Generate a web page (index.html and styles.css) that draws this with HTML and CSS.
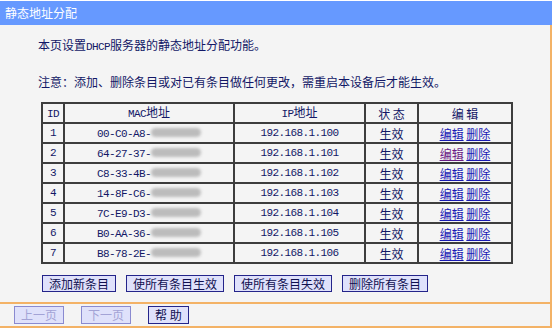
FILE: index.html
```html
<!DOCTYPE html>
<html lang="zh-CN">
<head>
<meta charset="utf-8">
<title>静态地址分配</title>
<link rel="stylesheet" href="styles.css">
</head>
<body>
<div class="page">
  <div class="titlebar">静态地址分配</div>
  <div class="content">
    <p class="line first">本页设置<span class="asc">DHCP</span>服务器的静态地址分配功能。</p>
    <p class="line second">注意：添加、删除条目或对已有条目做任何更改，需重启本设备后才能生效。</p>
    <table class="grid">
      <colgroup>
        <col class="c-id"><col class="c-mac"><col class="c-ip"><col class="c-st"><col class="c-ed">
      </colgroup>
      <thead>
        <tr><th><span class="asc">ID</span></th><th><span class="asc">MAC</span>地址</th><th><span class="asc">IP</span>地址</th><th>状 态</th><th>编 辑</th></tr>
      </thead>
      <tbody>
        <tr><td class="asc">1</td><td><span class="asc">00-C0-A8-</span><span class="blur"></span></td><td class="asc">192.168.1.100</td><td>生效</td><td><a href="#" class="lnk">编辑</a> <a href="#" class="lnk">删除</a></td></tr>
        <tr><td class="asc">2</td><td><span class="asc">64-27-37-</span><span class="blur"></span></td><td class="asc">192.168.1.101</td><td>生效</td><td><a href="#" class="lnk visited">编辑</a> <a href="#" class="lnk">删除</a></td></tr>
        <tr><td class="asc">3</td><td><span class="asc">C8-33-4B-</span><span class="blur"></span></td><td class="asc">192.168.1.102</td><td>生效</td><td><a href="#" class="lnk">编辑</a> <a href="#" class="lnk">删除</a></td></tr>
        <tr><td class="asc">4</td><td><span class="asc">14-8F-C6-</span><span class="blur"></span></td><td class="asc">192.168.1.103</td><td>生效</td><td><a href="#" class="lnk">编辑</a> <a href="#" class="lnk">删除</a></td></tr>
        <tr><td class="asc">5</td><td><span class="asc">7C-E9-D3-</span><span class="blur"></span></td><td class="asc">192.168.1.104</td><td>生效</td><td><a href="#" class="lnk">编辑</a> <a href="#" class="lnk">删除</a></td></tr>
        <tr><td class="asc">6</td><td><span class="asc">B0-AA-36-</span><span class="blur"></span></td><td class="asc">192.168.1.105</td><td>生效</td><td><a href="#" class="lnk">编辑</a> <a href="#" class="lnk">删除</a></td></tr>
        <tr><td class="asc">7</td><td><span class="asc">B8-78-2E-</span><span class="blur"></span></td><td class="asc">192.168.1.106</td><td>生效</td><td><a href="#" class="lnk">编辑</a> <a href="#" class="lnk">删除</a></td></tr>
      </tbody>
    </table>
    <div class="actions">
      <button class="btn">添加新条目</button>
      <button class="btn">使所有条目生效</button>
      <button class="btn">使所有条目失效</button>
      <button class="btn">删除所有条目</button>
    </div>
  </div>
  <div class="footer">
    <button class="btn btn-foot" disabled>上一页</button>
    <button class="btn btn-foot" disabled>下一页</button>
    <button class="btn btn-foot">帮 助</button>
  </div>
</div>
</body>
</html>
```

FILE: styles.css
```css
html, body {
  margin: 0;
  padding: 0;
  background: #ffffff;
}

body {
  font-family: "Noto Sans CJK SC", "Liberation Sans", sans-serif;
  font-size: 12px;
  color: #121766;
}

.page {
  width: 552px;
  padding-top: 1px;
}

.titlebar {
  height: 24px;
  line-height: 24px;
  background: #6699ff;
  color: #ffffff;
  padding-left: 5px;
  font-size: 12px;
}

.content {
  background: #f4f4f4;
  border-right: 2px solid #f3b266;
  padding: 12px 0 10px 38px;
}

.line {
  margin: 0;
  line-height: 16px;
  white-space: nowrap;
}

.second {
  margin-top: 19px;
}

.asc {
  font-family: "Liberation Mono", "DejaVu Sans Mono", monospace;
  font-size: 11px;
  letter-spacing: -0.6px;
}

.grid {
  margin: 12px 0 0 3px;
  border-collapse: collapse;
  width: 470px;
  border: 2px solid #3d3d3d;
  table-layout: fixed;
}

.c-id { width: 22px; }
.c-mac { width: 170px; }
.c-ip { width: 131px; }
.c-st { width: 53px; }
.c-ed { width: 94px; }

.grid th,
.grid td {
  border: 2px solid #3d3d3d;
  height: 15.7px;
  padding: 0;
  line-height: 15px;
  text-align: center;
  font-weight: normal;
  white-space: nowrap;
  color: #121766;
}

.blur {
  display: inline-block;
  width: 50px;
  height: 9px;
  vertical-align: middle;
  background: #bcbcbc;
  border-radius: 6px;
  filter: blur(1.5px);
  margin-top: -2px;
}

.lnk {
  color: #1a1ab4;
  text-decoration: underline;
}

.lnk.visited {
  color: #6a1b86;
}

.actions {
  margin: 11px 0 0 4px;
  display: flex;
  gap: 10px;
}

.btn {
  font-family: "Noto Sans CJK SC", sans-serif;
  font-size: 12px;
  line-height: 15px;
  height: 17px;
  padding: 0 6px;
  margin: 0;
  background: #dfe1fb;
  border: 1px solid #24248a;
  color: #101050;
  border-radius: 0;
  white-space: nowrap;
}

.footer {
  background: #f4f4f4;
  border-top: 2px solid #f3b266;
  border-bottom: 2px solid #f3b266;
  border-right: 2px solid #f3b266;
  padding: 2px 0 2px 14px;
  display: flex;
  gap: 17px;
}

.btn-foot {
  height: 18px;
  line-height: 16px;
}

.btn-foot:disabled {
  color: #a3a3d6;
  border-color: #8a8ad0;
  background: #dfe1fb;
}
```
